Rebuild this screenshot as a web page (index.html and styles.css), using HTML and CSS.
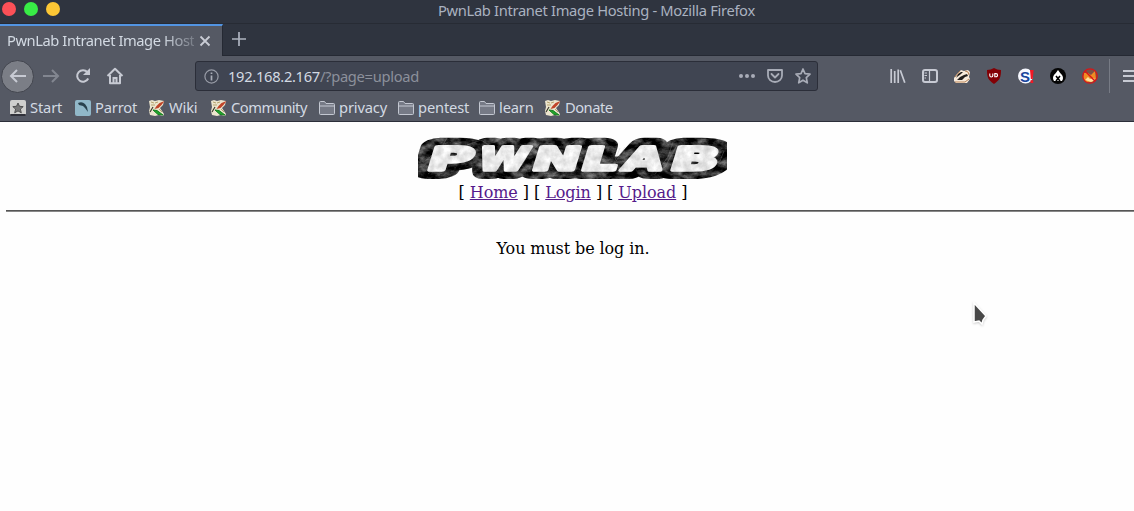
FILE: index.html
```
<!DOCTYPE html>
<html lang="en">
<head>
<meta charset="utf-8">
<title>PwnLab Intranet Image Hosting</title>
<link rel="stylesheet" href="styles.css">
</head>
<body>
<svg class="defs" width="0" height="0" aria-hidden="true">
  <symbol id="feather" viewBox="0 0 16 16">
    <path d="M0 1l3-1 3 1 4-1 5 1-1 4-3 3 2 3 2 3-1 2-4-1-4 1-5-1-1-4 1-4z" fill="#ece5ce"/>
    <path d="M2 2l3 1M6 3l3-1M2 5h4M10 9l3 3" stroke="#b6a36e" stroke-width="1"/>
    <path d="M15.500 1l-5 2-3 3-2 3 4-1 3-3z" fill="#c04428"/>
    <path d="M1 12l3-5" stroke="#3c392c" stroke-width="1.200"/>
    <path d="M4 10l4 .5 6 4.500-5-.5z" fill="#20a52b" stroke="#158020"/>
  </symbol>
  <symbol id="folder" viewBox="0 0 16 14">
    <path d="M.5 12.500v-11q0-1 1-1h4l1.500 2h7.500q1 0 1 1v9q0 1-1 1h-13q-1 0-1-1zM.5 5h15" fill="#767a86" stroke="#c3c7d1"/>
  </symbol>
</svg>
<header class="browser">
  <div class="titlebar">
    <div class="lights"><i class="red"></i><i class="green"></i><i class="yellow"></i></div>
    <div class="window-title">PwnLab Intranet Image Hosting - Mozilla Firefox</div>
  </div>
  <div class="tabs">
    <div class="tab"><span class="tab-label">PwnLab Intranet Image Host</span>
      <svg class="close" width="12" height="12" viewBox="0 0 12 12"><path d="M1.500 1.500l9 9m0-9l-9 9" stroke="#c9ccd5" stroke-width="1.800"/></svg>
    </div>
    <svg class="plus" width="16" height="16" viewBox="0 0 16 16"><path d="M8 1v14M1 8h14" stroke="#aeb4c0" stroke-width="1.700"/></svg>
  </div>
  <nav class="toolbar">
    <div class="back"><svg width="18" height="16" viewBox="0 0 18 16"><path d="M17 8H2M8 2L2 8l6 6" class="line"/></svg></div>
    <svg class="forward" width="18" height="16" viewBox="0 0 18 16"><path d="M1 8h15M10 2l6 6-6 6" class="line"/></svg>
    <svg class="reload" width="16" height="16" viewBox="0 0 16 16"><path d="M13.200 10.500A5.800 5.800 0 1 1 12.400 4.200" class="line"/><path d="M15 0v7H8z" fill="#c7cad3"/></svg>
    <svg class="home" width="18" height="18" viewBox="0 0 18 18"><path d="M1.500 9L9 1.700 16.500 9M4 8v8.200h10V8" class="line" stroke-linejoin="round"/><path d="M7.500 16v-5h3v5" class="line"/></svg>
    <div class="address">
      <svg class="info" width="15" height="15" viewBox="0 0 15 15"><circle cx="7.500" cy="7.500" r="6.600" fill="none" stroke="#989ca7" stroke-width="1.200"/><path d="M7.500 6.500v5M7.500 3.500v1.600" stroke="#aaaeb8" stroke-width="1.700"/></svg>
      <div class="url"><span>192.168.2.167</span>/?page=upload</div>
      <div class="url-actions">
        <svg width="16" height="16" viewBox="0 0 16 16"><g fill="#a8acb7"><circle cx="2" cy="8" r="2"/><circle cx="8" cy="8" r="2"/><circle cx="14" cy="8" r="2"/></g></svg>
        <svg width="16" height="16" viewBox="0 0 16 16"><path d="M1 2h14v5.500a7 6.500 0 0 1-14 0zM4.500 6L8 9.500 11.500 6" fill="none" stroke="#a8acb7" stroke-width="1.800" stroke-linejoin="round" stroke-linecap="round"/></svg>
        <svg width="16" height="16" viewBox="0 0 16 16"><path d="M8 1l2 4.600 5 .5-3.700 3.500 1 5.200L8 12.200l-4.300 2.600 1-5.200L1 6.100l5-.5z" fill="none" stroke="#a8acb7" stroke-width="1.700" stroke-linejoin="round"/></svg>
      </div>
    </div>
    <div class="extensions">
      <svg width="16" height="16" viewBox="0 0 16 16"><path d="M1.200 1v14M4.700 3v12M8.200 1.500V15M10.300 2.200l4.500 12.500" fill="none" stroke="#c7cad3" stroke-width="1.700"/></svg>
      <svg width="16" height="16" viewBox="0 0 16 16"><rect x="1" y="2" width="14" height="12" rx="2" class="line"/><path d="M7.500 2v12M2.500 5H5M2.500 7.500H5M2.500 10H4" class="line thin"/></svg>
      <svg width="16" height="16" viewBox="0 0 16 16"><path d="M0 10l3-4 4-4 3 1 4-1 2 2-1 5 1 2-3 4H2l-2-2z" fill="#f7eadb"/><path d="M4 6l3-2 2 0-2 2-4 3-1 1M3 12l3-3 4-2 3-1 1 2-3 1-3 3z" fill="#211e1c"/><path d="M11 3l3 1 1 3M1 14h10l4-3M1 9l5-6" stroke="#b98457" fill="none"/></svg>
      <svg width="16" height="16" viewBox="0 0 16 16"><path d="M8 0q3 2 7 2c0 7-1 10-7 14C2 12 1 9 1 2q4 0 7-2z" fill="#830005"/><path d="M3.800 5.500v2a1.500 1.500 0 0 0 3 0v-2M8.800 8.700V5.600h1.200a1.500 1.500 0 0 1 0 3.100z" fill="none" stroke="#fff" stroke-width="1.100"/></svg>
      <svg width="16" height="16" viewBox="0 0 16 16"><circle cx="7.500" cy="8" r="7.500" fill="#f6f8ff"/><text x="2" y="13.500" class="script-s">S</text><path d="M12 2h3.600l-.8 9h-2zM12.500 12.300h2.700V15h-2.700z" fill="#f21825"/></svg>
      <svg width="16" height="16" viewBox="0 0 16 16"><circle cx="8" cy="8" r="8" fill="#050505"/><path d="M8 2q2 3 4 5 2 3 0 6H4Q2 10 4 7q2-2 4-5z" fill="#fff"/><path d="M6 8l4 5m0-5l-4 5" stroke="#000" stroke-width="1.600"/></svg>
      <svg width="16" height="16" viewBox="0 0 16 16"><circle cx="8" cy="8" r="7.200" fill="#7c5146"/><path d="M2 5l4 0 3 2 4-4 1 8-4 3H4L1 10z" fill="#f08b22"/><path d="M3 12l3-3 2 2 4-1 1 2-4 2z" fill="#ffe0a0"/><circle cx="8" cy="8" r="7.200" fill="none" stroke="#d71718" stroke-width="1.300"/><path d="M3 3l10 10" stroke="#d71718" stroke-width="1.500"/></svg>
    </div>
    <svg class="menu" width="16" height="16" viewBox="0 0 16 16"><path d="M0 3h16M0 8h16M0 13h16" class="line"/></svg>
  </nav>
  <nav class="bookmarks">
    <a class="b-start"><svg width="16" height="16" viewBox="0 0 16 16"><rect width="16" height="16" rx="2" fill="#d0d0ce"/><rect y="14" width="16" height="2" rx="1" fill="#303139"/><path d="M8 3l1.500 3.300 3.700.3-2.800 2.500.9 3.700L8 10.900l-3.300 1.900.9-3.700-2.800-2.500 3.700-.3z" fill="#777" stroke="#505050"/></svg><span>Start</span></a>
    <a class="b-parrot"><svg width="16" height="16" viewBox="0 0 16 16"><rect width="16" height="16" rx="2" fill="#91b8c9"/><path d="M3 3q4-2 7 1l2 3 1 5-3-4-2-2-4-1z" fill="#29424e"/></svg><span>Parrot</span></a>
    <a class="b-wiki"><svg width="16" height="16"><use href="#feather"/></svg><span>Wiki</span></a>
    <a class="b-community"><svg width="16" height="16"><use href="#feather"/></svg><span>Community</span></a>
    <a class="b-privacy"><svg width="16" height="14"><use href="#folder"/></svg><span>privacy</span></a>
    <a class="b-pentest"><svg width="16" height="14"><use href="#folder"/></svg><span>pentest</span></a>
    <a class="b-learn"><svg width="16" height="14"><use href="#folder"/></svg><span>learn</span></a>
    <a class="b-donate"><svg width="16" height="16"><use href="#feather"/></svg><span>Donate</span></a>
  </nav>
</header>
<main class="page">
  <svg class="logo" width="310" height="43" viewBox="0 0 310 43" role="img" aria-label="PWNLAB">
    <defs>
      <filter id="marble" x="0" y="0" width="309" height="43" filterUnits="userSpaceOnUse" color-interpolation-filters="sRGB">
        <feTurbulence type="fractalNoise" baseFrequency=".09 .14" numOctaves="5" seed="7" result="n"/>
        <feColorMatrix in="n" values="1 0 0 0 -.34  1 0 0 0 -.34  1 0 0 0 -.34  0 0 0 0 1"/>
        <feComposite in2="SourceGraphic" operator="in"/>
      </filter>
      <filter id="stone" x="0" y="0" width="310" height="43" filterUnits="userSpaceOnUse" color-interpolation-filters="sRGB">
        <feTurbulence type="fractalNoise" baseFrequency=".12" numOctaves="4" seed="4" result="n"/>
        <feColorMatrix in="n" values=".3 0 0 0 .77  .3 0 0 0 .77  .3 0 0 0 .77  0 0 0 0 1"/>
        <feComposite in2="SourceGraphic" operator="in"/>
      </filter>
      <g id="word" class="logo-letters">
        <text transform="translate(7 33.500) skewX(-17)" textLength="45" lengthAdjust="spacingAndGlyphs">P</text>
        <text transform="translate(58 33.500) skewX(-17)" textLength="49" lengthAdjust="spacingAndGlyphs">W</text>
        <text transform="translate(112 33.500) skewX(-17)" textLength="47" lengthAdjust="spacingAndGlyphs">N</text>
        <text transform="translate(161 33.500) skewX(-17)" textLength="36" lengthAdjust="spacingAndGlyphs">L</text>
        <text transform="translate(203 33.500) skewX(-17)" textLength="39" lengthAdjust="spacingAndGlyphs">A</text>
        <text transform="translate(250 33.500) skewX(-17)" textLength="48" lengthAdjust="spacingAndGlyphs">B</text>
      </g>
    </defs>
    <g filter="url(#marble)"><use href="#word" class="logo-border"/></g>
    <g class="veins"><path d="M7 25l16-13 6-10M10 38l10-8 14-3M49 9l14-5 14 9M94 34l11-6 8-17M151 9l12-7M183 36l13-9 6-15M237 38l13-17 5-15M287 34l15-9 4-10"/><path d="M103 25l18-17M195 30l12-19M247 31l12-22M300 16l-13 21"/></g>
    <g filter="url(#stone)"><use href="#word" class="logo-face"/></g>
  </svg>
  <div class="links">[ <a>Home</a> ] [ <a>Login</a> ] [ <a>Upload</a> ]</div>
  <div class="rule"></div>
  <p>You must be log in.</p>
</main>
<svg class="cursor" width="18" height="26" viewBox="0 0 18 26"><path d="M3 2v19l5-1 3 3 1-4 3-4z" fill="#484848" stroke="#fff" stroke-width="1.500"/></svg>
</body>
</html>
```
FILE: styles.css
```
* { box-sizing: border-box; }
body { margin: 0; width: 1134px; height: 511px; overflow: hidden; background: #fefefe; position: relative; }
svg { display: block; flex: none; }
.defs { position: absolute; }
.browser { height: 122px; background: #555964; color: #d3dae3; font: 14.7px "Noto Sans", sans-serif; }
.titlebar { height: 24px; background: #2f343f; display: flex; border-bottom: 1px solid #272b34; }
.lights { width: 438px; display: flex; gap: 8px; padding: 2px 0 0 2px; }
.lights i { width: 14px; height: 14px; border-radius: 50%; }
.red { background: #fc5057; }
.green { background: #38ec46; }
.yellow { background: #fdc735; }
.window-title { line-height: 21px; color: #aab2c0; white-space: nowrap; letter-spacing: -.32px; }
.tabs { height: 32px; display: flex; background: #2f343f; border-bottom: 1px solid #252933; }
.tab { width: 223px; height: 32px; background: #555964; border-top: 2px solid #5294e2; border-right: 1px solid #252933; display: flex; align-items: center; padding-left: 7px; }
.tab-label { width: 187px; height: 28px; line-height: 27px; white-space: nowrap; letter-spacing: -.42px; mask-image: linear-gradient(to right, #000 155px, #0004 187px); }
.close { margin-left: 5px; }
.plus { margin: 7px 0 0 8px; }
.toolbar { height: 40px; display: flex; align-items: center; overflow: hidden; }
.line { fill: none; stroke: #c7cad3; stroke-width: 2; }
.thin { stroke-width: 1.2; }
.back { width: 33px; height: 33px; flex: none; margin-left: 1px; border: 1px solid #42454e; border-radius: 50%; background: #7b7e86; display: flex; align-items: center; justify-content: center; }
.forward { margin-left: 8px; opacity: .4; }
.reload { margin-left: 15px; }
.home { margin-left: 15px; }
.address { flex: none; width: 623px; height: 30px; margin-left: 71px; background: #404552; border: 1px solid #2b2e39; border-radius: 3px; display: flex; align-items: center; }
.info { margin-left: 8px; }
.url { margin-left: 9px; flex: 1; color: #8c909b; letter-spacing: -.3px; }
.url span { color: #d3dae3; }
.url-actions { display: flex; gap: 12px; padding-right: 6px; }
.extensions { flex: none; display: flex; gap: 16px; margin-left: 72px; padding-right: 11px; height: 34px; align-items: center; border-right: 1px solid #777b85; }
.script-s { font: bold 15px "Liberation Sans", sans-serif; fill: #17459c; }
.menu { margin-left: 13px; }
.bookmarks { height: 26px; display: flex; align-items: center; padding: 0 0 2px 10px; border-bottom: 1px solid #2b2e39; }
.bookmarks a { display: flex; align-items: center; gap: 4px; white-space: nowrap; letter-spacing: -.15px; }
.bookmarks span { padding-bottom: 2px; }
.bookmarks .b-community, .bookmarks .b-donate { letter-spacing: -.5px; }
.b-start { width: 65px; }
.b-parrot { width: 74px; }
.b-wiki { width: 62px; }
.b-community { width: 108px; }
.b-privacy { width: 79px; }
.b-pentest { width: 81px; }
.b-learn { width: 66px; }
.page { width: 1134px; margin-left: 6px; padding-top: 14px; font: 16px/19px "DejaVu Serif", serif; color: #000; text-align: center; }
.logo { margin: 0 auto; }
.logo-letters { font: 900 32px "DejaVu Sans", sans-serif; stroke-linejoin: round; }
.logo-border { fill: #222; stroke: #222; stroke-width: 18px; }
.logo-face { fill: #eee; stroke: #eee; stroke-width: 3.500px; stroke-linejoin: miter; }
.veins { fill: none; stroke: #aaa; stroke-width: .7px; opacity: .4; }
.links { margin-top: 4px; letter-spacing: -.06px; }
.links a { color: #551a8b; text-decoration: underline; }
.rule { height: 2px; margin-top: 8px; border-top: 1px solid #555; background: #888; }
.page p { margin: 27px 0 0; letter-spacing: -.1px; }
.cursor { position: absolute; left: 971px; top: 301px; filter: drop-shadow(0 1px 1px #0003); }
```
